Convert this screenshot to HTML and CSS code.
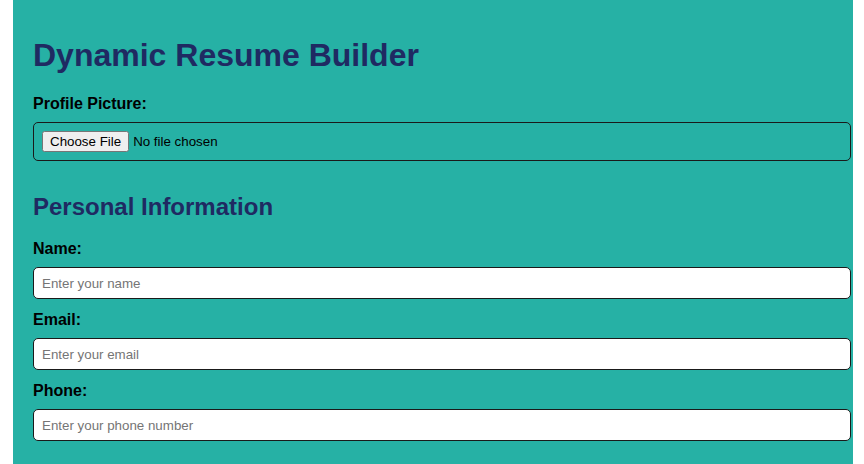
FILE: index.html
```html
<!DOCTYPE html>
<html lang="en">
<head>
<meta charset="utf-8">
<title>Dynamic Resume Builder</title>
<link rel="stylesheet" href="styles.css">
</head>
<body>
<div class="container">
  <h1 class="title">Dynamic Resume Builder</h1>
  <label class="field-label" for="pic">Profile Picture:</label>
  <input class="file-input" type="file" id="pic">

  <h2 class="section-title">Personal Information</h2>
  <label class="field-label" for="name">Name:</label>
  <input class="text-input" type="text" id="name" placeholder="Enter your name">
  <label class="field-label" for="email">Email:</label>
  <input class="text-input" type="email" id="email" placeholder="Enter your email">
  <label class="field-label" for="phone">Phone:</label>
  <input class="text-input" type="tel" id="phone" placeholder="Enter your phone number">
</div>
</body>
</html>
```

FILE: styles.css
```css
html, body {
  margin: 0;
  padding: 0;
  background: #ffffff;
  font-family: "Liberation Sans", Arial, sans-serif;
}

.container {
  margin-left: 13px;
  width: 800px;
  padding: 16px 20px 40px;
  background: #26b1a5;
}

.title {
  margin: 21px 0 21px;
  font-size: 32px;
  font-weight: bold;
  color: #1f2a62;
}

.section-title {
  margin: 32px 0 19px;
  font-size: 24px;
  font-weight: bold;
  color: #1f2a62;
}

.field-label {
  display: block;
  margin: 0 0 9px;
  font-size: 16px;
  font-weight: bold;
  color: #000;
}

.file-input,
.text-input {
  display: block;
  width: 100%;
  box-sizing: content-box;
  padding: 8px;
  border: 1px solid #1a1a1a;
  border-radius: 5px;
  font-family: "Liberation Sans", Arial, sans-serif;
  font-size: 13.33px;
  color: #000;
}

.file-input {
  background: transparent;
}

.text-input {
  height: 14px;
  margin: 0 0 12px;
  background: #fff;
}

.text-input::placeholder {
  color: #757575;
}
```
